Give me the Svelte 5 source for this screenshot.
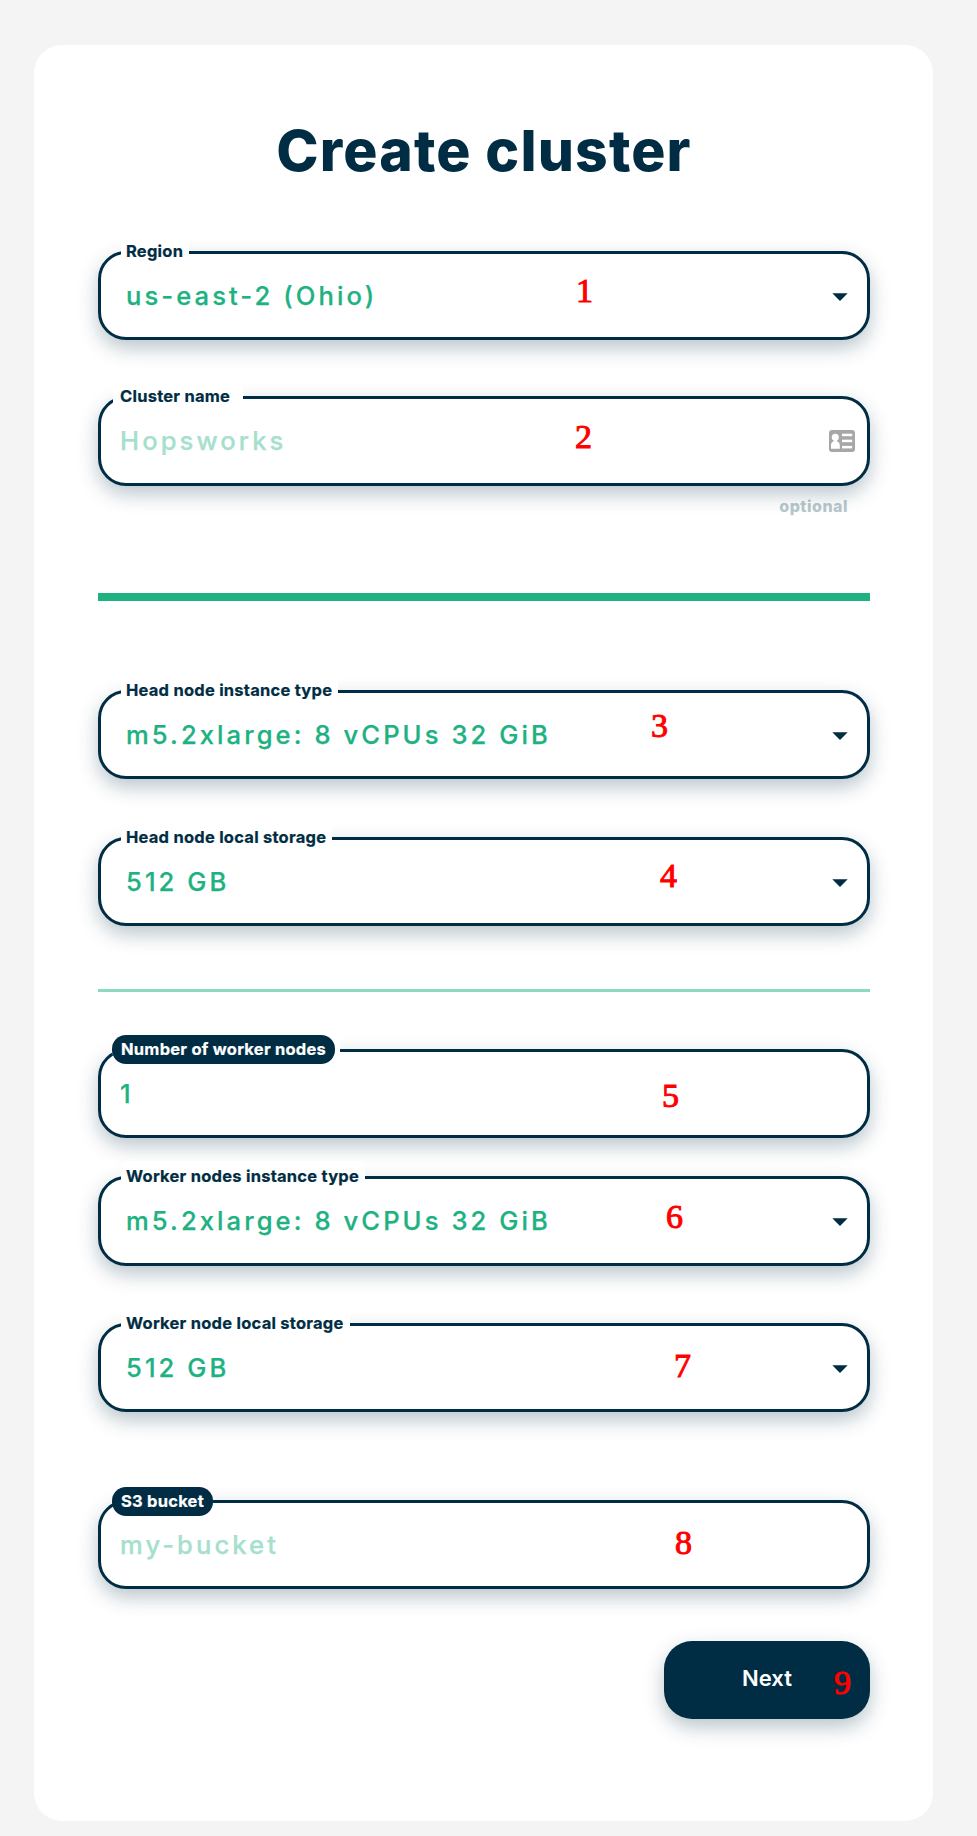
<script>
  const fields = [
    { label: 'Region', value: 'us-east-2 (Ohio)', kind: 'select', mark: { n: 1, x: 475, y: 17 } },
    { label: 'Cluster name', value: 'Hopsworks', kind: 'plain', empty: true, card: true, mark: { n: 2, x: 474, y: 18 } }
  ];
  const head = [
    { label: 'Head node instance type', value: 'm5.2xlarge: 8 vCPUs 32 GiB', kind: 'select', mark: { n: 3, x: 550, y: 13 } },
    { label: 'Head node local storage', value: '512 GB', kind: 'select', mark: { n: 4, x: 559, y: 16 } }
  ];
  const workers = [
    { label: 'Number of worker nodes', value: '1', kind: 'pill', gap: true, mark: { n: 5, x: 561, y: 24 } },
    { label: 'Worker nodes instance type', value: 'm5.2xlarge: 8 vCPUs 32 GiB', kind: 'select', mark: { n: 6, x: 565, y: 18 } },
    { label: 'Worker node local storage', value: '512 GB', kind: 'select', mark: { n: 7, x: 573, y: 20 } },
    { label: 'S3 bucket', value: 'my-bucket', kind: 'pill low', empty: true, mark: { n: 8, x: 574, y: 20 } }
  ];
</script>

{#snippet field(f)}
  <div class="field {f.kind}" class:tall={f.card || f.label.startsWith('Worker nodes')}>
    <span class="label" class:gap={f.gap}><span>{f.label}</span></span>
    <span class="value" class:empty={f.empty}>{f.value}</span>
    {#if f.kind === 'select'}
      <svg class="arrow" width="16" height="8" viewBox="0 0 16 8"><path d="M0.3 0.2H15.7L8 8Z" fill="#002d43" /></svg>
    {/if}
    {#if f.card}
      <svg class="card-icon" width="26" height="22" viewBox="0 0 26 22">
        <rect width="26" height="22" rx="3" fill="#a7a7a7" />
        <g fill="#fff">
          <circle cx="6.3" cy="7.2" r="3.5" />
          <path d="M4.800 9h3v2.200c2 .6 3 2 3 4.300V18.700H2v-3.200c0-2.300.8-3.700 2.800-4.300Z" />
          <rect x="13" y="3.700" width="10.200" height="2.500" />
          <rect x="13" y="9.700" width="10.200" height="2.500" />
          <rect x="13" y="15.900" width="10.200" height="2.500" />
        </g>
      </svg>
    {/if}
    <b class="mark" style="left:{f.mark.x}px;top:{f.mark.y}px">{f.mark.n}</b>
  </div>
{/snippet}

<main>
  <section>
    <h1>Create cluster</h1>
    <div class="group first">
      {#each fields as f}{@render field(f)}{/each}
    </div>
    <div class="hint">optional</div>
    <div class="thick"></div>
    <div class="group head">
      {#each head as f}{@render field(f)}{/each}
    </div>
    <div class="thin"></div>
    <div class="group workers">
      {#each workers as f}{@render field(f)}{/each}
    </div>
    <button>Next<b class="mark next-mark">9</b></button>
  </section>
</main>

<style>
  :global(body) { background: #f4f4f4; }
  main { box-sizing: border-box; height: 1836px; padding: 45px 44px 15px 34px; font-family: Inter, sans-serif; color: #002d43; }
  section { box-sizing: border-box; height: 1776px; padding: 0 63px 0 64px; background: #fff; border-radius: 28px; display: flex; flex-direction: column; }
  h1 { margin: 66px 0 0; height: 80px; line-height: 80px; text-align: center; font-size: 57px; font-weight: 800; white-space: nowrap; letter-spacing: 1.15px; }
  .group { display: flex; flex-direction: column; }
  .first { margin-top: 60px; gap: 56px; }
  .head { margin-top: 89px; gap: 58px; }
  .workers { margin-top: 57px; }
  .workers .field:nth-child(2) { margin-top: 38px; }
  .workers .field:nth-child(3) { margin-top: 57px; }
  .workers .field:nth-child(4) { margin-top: 88px; }
  .field { position: relative; box-sizing: border-box; height: 89px; border: 3px solid #002d43; border-radius: 28px; background: #fff; box-shadow: 0 8px 20px rgba(0, 45, 67, 0.28); display: flex; align-items: center; padding: 0 19px; }
  .tall { height: 90px; }
  .select { padding-left: 25px; }
  .value { flex: 1; padding-top: 1px; font-size: 25.6px; line-height: 30px; font-weight: 500; letter-spacing: 0.12em; color: #1eb182; -webkit-text-stroke: 0.25px currentColor; white-space: nowrap; }
  .tall .value { padding-top: 0; }
  .empty { color: #a5e0cd; }
  .label { position: absolute; left: 20px; top: -18px; height: 30px; line-height: 30px; padding: 0 6px 0 5px; background: #fff; border-radius: 6px; font-size: 16.5px; font-weight: 700; letter-spacing: 0.24px; -webkit-text-stroke: 0.2px currentColor; white-space: nowrap; }
  .plain .label { left: 12px; padding: 0 13px 0 7px; }
  .pill .label { left: 11px; top: -17px; height: 29px; line-height: 29px; padding: 0; background: none; color: #fff; }
  .pill .label.gap { background: #fff; padding-right: 5px; border-radius: 14px 0 0 14px; }
  .pill .label span { display: block; background: #002d43; border-radius: 14px; padding: 0 9px; }
  .low .label { top: -16px; }
  .arrow { display: block; margin-top: 2px; }
  .card-icon { display: block; margin-right: -7px; }
  .mark { position: absolute; font: 400 34px/40px "Liberation Serif", serif; color: #f00; -webkit-text-stroke: 1px #f00; letter-spacing: 0; }
  .hint { margin: 8px 22px 0 0; height: 24px; line-height: 24px; text-align: right; font-size: 16px; font-weight: 800; letter-spacing: 0.5px; color: #b7c8cc; }
  .thick { margin-top: 75px; height: 8px; background: #1eb182; flex: none; }
  .thin { margin-top: 63px; height: 3px; background: #8cd8c0; flex: none; }
  button { position: relative; align-self: flex-end; margin-top: 52px; width: 206px; height: 78px; padding: 0 0 4px; border: 0; border-radius: 28px; background: #002d43; box-shadow: 0 8px 20px rgba(0, 45, 67, 0.28); color: #fff; font: 600 22px/26px Inter, sans-serif; }
  .next-mark { left: 170px; top: 22px; }
</style>
